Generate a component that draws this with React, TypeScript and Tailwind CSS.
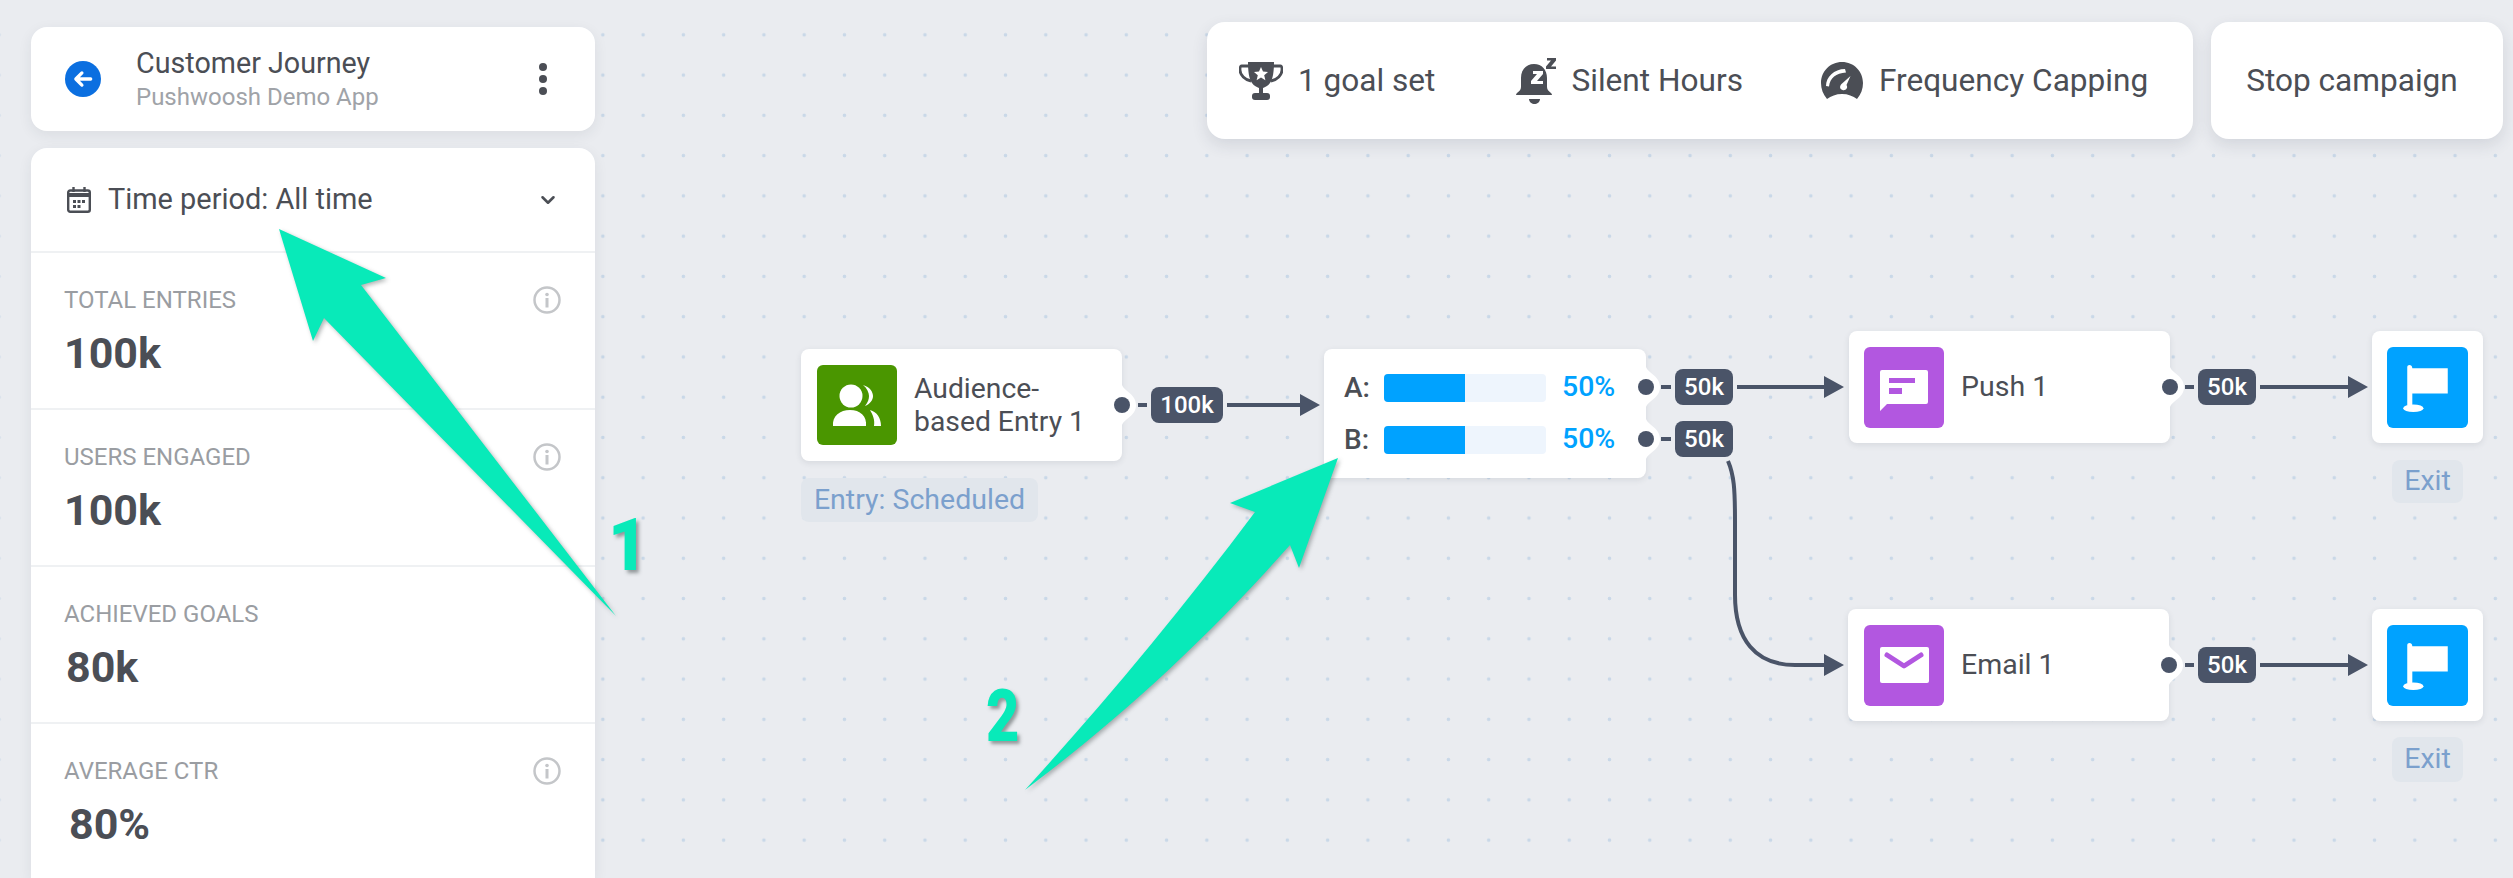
import { ChevronDown } from 'lucide-react';

const TrophyIcon = () => (
  <svg viewBox="0 0 44 38" className="h-[38px] w-[44px] shrink-0" fill="#4b4e55">
    <path d="M9 0h26c0 9-1 17-4 21-2 3-5 4-7 5v5h-4v-5c-2-1-5-2-7-5C10 17 9 9 9 0z" />
    <path d="M10 4H2.500C1 4 1 6 1 8c0 5 5 10 11 11M34 4h7.500C43 4 43 6 43 8c0 5-5 10-11 11" fill="none" stroke="#4b4e55" strokeWidth="2.800" />
    <rect x="13" y="31" width="18" height="7" rx="3" />
    <path d="M22 5l2 4.600 5 .4-3.800 3.300 1.200 5L22 15.600l-4.400 2.700 1.200-5L15 10l5-.4z" fill="#fff" />
  </svg>
);

const SilentBellIcon = () => (
  <svg viewBox="0 0 40 46" className="h-[46px] w-[40px] shrink-0" fill="#4b4e55">
    <path d="M18 6c8 0 13 6 13 14v9c0 3 2 4 4 6 1 1 1 2 1 2H0s0-1 1-2c2-2 4-3 4-6v-9C5 12 10 6 18 6z" />
    <path d="M13 41h11c0 3-3 5-5.500 5S13 44 13 41z" />
    <path d="M17 13h10v3l-6 7h6v3H15v-3l6-7h-4z" fill="#fff" />
    <path d="M31 0h9v2.500l-5 6h5V11H30V8.500l5-6h-4z" />
  </svg>
);

const GaugeIcon = () => (
  <svg viewBox="0 0 42 38" className="h-[38px] w-[42px] shrink-0" fill="#4b4e55">
    <path d="M21 0c12 0 21 9.500 21 21 0 6-2 11-6 16-4-3-9-5-15-5S10 34 6 37c-4-5-6-10-6-16C0 9.500 9 0 21 0z" />
    <path d="M5 24c0-9 8-17 19-17l1 3.500C15 11 9 16 8 24.500z" fill="#fff" />
    <path d="M29.500 14l-4 9c2 3-1 6-4 5-3-1-3-4-1-6z" fill="#fff" />
  </svg>
);

const InfoIcon = () => (
  <svg viewBox="0 0 28 28" className="h-[28px] w-[28px]" fill="none">
    <circle cx="14" cy="14" r="12.500" stroke="#c4c6c9" strokeWidth="2.500" />
    <circle cx="14" cy="8.500" r="1.800" fill="#c4c6c9" />
    <rect x="12.500" y="12" width="3" height="9.500" fill="#c4c6c9" />
  </svg>
);

const stats = [
  { label: 'TOTAL ENTRIES', value: '100k', info: true, indent: 'ml-0' },
  { label: 'USERS ENGAGED', value: '100k', info: true, indent: 'ml-0' },
  { label: 'ACHIEVED GOALS', value: '80k', info: false, indent: 'ml-[2px]' },
  { label: 'AVERAGE CTR', value: '80%', info: true, indent: 'ml-[5px]' },
];

const Sidebar = () => (
  <aside className="flex w-[564px] shrink-0 flex-col gap-[17px]">
    <div className="flex h-[104px] shrink-0 items-center rounded-[16px] bg-white pl-[34px] pr-[48px] shadow-[0_4px_14px_rgba(40,50,70,0.08)]">
      <div className="flex h-[36px] w-[36px] items-center justify-center rounded-full bg-[#0b6fe0]">
        <svg viewBox="0 0 20 20" className="h-[22px] w-[22px]" fill="none" stroke="#fff" strokeWidth="3" strokeLinecap="round" strokeLinejoin="round">
          <path d="M17 10H4M9 4.500L3.500 10 9 15.500" />
        </svg>
      </div>
      <div className="ml-[35px] flex-1">
        <div className="text-[28.7px] leading-[36px] text-[#4b4e55]">Customer Journey</div>
        <div className="text-[24px] leading-[32px] text-[#a0a3a8]">Pushwoosh Demo App</div>
      </div>
      <div className="flex flex-col gap-[4px]">
        <span className="h-[8px] w-[8px] rounded-full bg-[#4b4e55]" />
        <span className="h-[8px] w-[8px] rounded-full bg-[#4b4e55]" />
        <span className="h-[8px] w-[8px] rounded-full bg-[#4b4e55]" />
      </div>
    </div>

    <div className="min-h-0 flex-1 rounded-t-[16px] bg-white shadow-[0_4px_14px_rgba(40,50,70,0.08)]">
      <div className="flex h-[105px] items-center border-b-2 border-[#eff1f3] pl-[36px] pr-[36px]">
        <svg viewBox="0 0 24 26" className="h-[26px] w-[24px]" fill="none">
          <rect x="1.200" y="3.500" width="21.600" height="21.300" rx="2" stroke="#4b4e55" strokeWidth="2.400" />
          <path d="M1.500 8h21" stroke="#4b4e55" strokeWidth="4" />
          <path d="M6.500 0v5M17.500 0v5" stroke="#4b4e55" strokeWidth="2.400" />
          <path d="M6 13h3v3H6zM10.500 13h3v3h-3zM15 13h3v3h-3zM6 18h3v3H6zM10.500 18h3v3h-3z" fill="#4b4e55" />
        </svg>
        <span className="ml-[17px] flex-1 text-[28.9px] text-[#4b4e55]">Time period: All time</span>
        <ChevronDown className="h-[22px] w-[22px] text-[#4b4e55]" strokeWidth={2.800} />
      </div>
      {stats.map(s => (
        <div key={s.label} className="relative h-[157px] border-b-2 border-[#eff1f3] pl-[33px] pr-[34px] pt-[33px]">
          <div className="flex items-center justify-between">
            <span className="text-[24px] leading-[28px] text-[#9a9da2]">{s.label}</span>
            {s.info && <InfoIcon />}
          </div>
          <div className={`mt-[14px] text-[43px] font-bold leading-[50px] text-[#4b4e55] ${s.indent}`}>{s.value}</div>
        </div>
      ))}
    </div>
  </aside>
);

const Toolbar = () => (
  <div className="flex h-[117px] gap-[18px]">
    <div className="flex w-[986px] items-center rounded-[18px] bg-white pl-[32px] shadow-[0_6px_16px_rgba(40,50,70,0.12)]">
      <TrophyIcon />
      <span className="ml-[15px] text-[31.6px] text-[#4b4e55]">1 goal set</span>
      <span className="ml-[81px]"><SilentBellIcon /></span>
      <span className="ml-[15px] text-[31.6px] text-[#4b4e55]">Silent Hours</span>
      <span className="ml-[78px]"><GaugeIcon /></span>
      <span className="ml-[16px] text-[31.6px] text-[#4b4e55]">Frequency Capping</span>
    </div>
    <div className="flex w-[292px] items-center justify-center rounded-[18px] bg-white pr-[10px] text-[31.6px] text-[#4b4e55] shadow-[0_6px_16px_rgba(40,50,70,0.12)]">
      Stop campaign
    </div>
  </div>
);

// white bump + dot on the right edge of a node
const Port = ({ pos }: { pos: string }) => (
  <div className={`absolute h-[40px] w-[16px] ${pos}`}>
    <svg viewBox="0 0 16 40" className="absolute left-0 top-0 h-[40px] w-[16px]" fill="#fff">
      <path d="M0 0c3 7 14 9 14 20S3 33 0 40z" />
    </svg>
    <span className="absolute left-[-8px] top-[12px] h-[16px] w-[16px] rounded-full bg-[#4a5468]" />
  </div>
);

const Badge = ({ pos, text }: { pos: string; text: string }) => (
  <div className={`absolute flex h-[36px] items-center justify-center rounded-[8px] bg-[#4a5468] text-[24px] font-medium text-white ${pos}`}>
    {text}
  </div>
);

const Tag = ({ pos, text }: { pos: string; text: string }) => (
  <div className={`absolute flex items-center justify-center rounded-[8px] bg-[#e1e6ec] text-[28.5px] text-[#7ba0cd] ${pos}`}>
    {text}
  </div>
);

const FlagTile = () => (
  <div className="mx-auto mt-[15px] h-[81px] w-[81px] rounded-[6px] bg-[#00a2ff]">
    <svg viewBox="0 0 80 80" className="h-full w-full" fill="#fff">
      <path d="M20 20c0-3 5-3 5 1h35v25H25v12h-5z" />
      <ellipse cx="26" cy="60.500" rx="10" ry="3.800" />
    </svg>
  </div>
);

const Connectors = () => (
  <svg viewBox="0 0 2513 878" className="absolute inset-0 h-[878px] w-[2513px]" fill="none" stroke="#4a5468" strokeWidth="4">
    <path d="M1138 405h9M1227 405h74" />
    <path d="M1661 387h10M1661 439h10M1737 387h88" />
    <path d="M2185 387h9M2260 387h88M2185 665h9M2260 665h88" />
    <path d="M1728 461c6 14 7 28 7 60v74c0 44 20 70 60 70h29" />
    <g fill="#4a5468" stroke="none">
      <path d="M1300 394l20 11-20 11zM1824 376l20 11-20 11zM2348 376l20 11-20 11zM1824 654l20 11-20 11zM2348 654l20 11-20 11z" />
    </g>
  </svg>
);

const Canvas = () => (
  <div className="absolute inset-0">
    <Connectors />

    <div className="absolute left-[801px] top-[349px] flex h-[112px] w-[321px] items-center rounded-[8px] bg-white pl-[16px] shadow-[0_2px_6px_rgba(40,50,70,0.1)]">
      <div className="h-[80px] w-[80px] rounded-[6px] bg-[#4a9600]">
        <svg viewBox="0 0 80 80" className="h-full w-full" fill="#fff">
          <circle cx="34" cy="31" r="11.500" />
          <path d="M16 61c-1-10 7-16 17-16s17 6 16 16z" />
          <path d="M46 20c7 2 10 7 10 11s-3 8-8 10c3-4 4-7 4-10s-2-8-6-11zM53 45c7 2 11 8 11 16h-7c1-6-1-11-4-16z" />
        </svg>
      </div>
      <div className="ml-[17px] text-[28.3px] leading-[33px] text-[#4b4e55]">Audience-<br />based Entry 1</div>
    </div>
    <Port pos="left-[1122px] top-[385px]" />
    <Badge pos="left-[1151px] top-[387px] w-[72px]" text="100k" />
    <Tag pos="left-[801px] top-[478px] h-[44px] w-[237px]" text="Entry: Scheduled" />

    <div className="absolute left-[1324px] top-[349px] flex h-[129px] w-[322px] flex-col justify-center gap-[24px] rounded-[8px] bg-white pl-[20px] shadow-[0_2px_6px_rgba(40,50,70,0.1)]">
      {['A:', 'B:'].map(l => (
        <div key={l} className="flex h-[28px] items-center">
          <span className="w-[40px] text-[28px] font-medium text-[#4b4e55]">{l}</span>
          <div className="h-[28px] w-[162px] overflow-hidden rounded-[4px] bg-[#eef5fd]">
            <div className="h-full w-[81px] bg-[#00a2ff]" />
          </div>
          <span className="ml-[16px] text-[28.4px] font-medium text-[#00a2ff]">50%</span>
        </div>
      ))}
    </div>
    <Port pos="left-[1646px] top-[367px]" />
    <Port pos="left-[1646px] top-[419px]" />
    <Badge pos="left-[1675px] top-[369px] w-[58px]" text="50k" />
    <Badge pos="left-[1675px] top-[421px] w-[58px]" text="50k" />

    <div className="absolute left-[1849px] top-[331px] flex h-[112px] w-[321px] items-center rounded-[8px] bg-white pl-[15px] shadow-[0_2px_6px_rgba(40,50,70,0.1)]">
      <div className="h-[81px] w-[80px] rounded-[6px] bg-[#b257e0]">
        <svg viewBox="0 0 80 81" className="h-full w-full">
          <path d="M16 25a2 2 0 012-2h44a2 2 0 012 2v30a2 2 0 01-2 2H23l-7 7z" fill="#fff" />
          <path d="M25 31h26v5H25zM25 41h13v6H25z" fill="#b257e0" />
        </svg>
      </div>
      <span className="ml-[17px] text-[28.5px] text-[#4b4e55]">Push 1</span>
    </div>
    <Port pos="left-[2170px] top-[367px]" />
    <Badge pos="left-[2198px] top-[369px] w-[58px]" text="50k" />
    <div className="absolute left-[2372px] top-[331px] h-[112px] w-[111px] rounded-[8px] bg-white pt-px shadow-[0_2px_6px_rgba(40,50,70,0.1)]">
      <FlagTile />
    </div>
    <Tag pos="left-[2392px] top-[460px] h-[43px] w-[71px]" text="Exit" />

    <div className="absolute left-[1848px] top-[609px] flex h-[112px] w-[321px] items-center rounded-[8px] bg-white pl-[16px] shadow-[0_2px_6px_rgba(40,50,70,0.1)]">
      <div className="h-[81px] w-[80px] rounded-[6px] bg-[#b257e0]">
        <svg viewBox="0 0 80 81" className="h-full w-full" fill="none">
          <rect x="16" y="22" width="49" height="36" rx="2" fill="#fff" />
          <path d="M23 30l17 11 17-11" stroke="#b257e0" strokeWidth="5" strokeLinecap="round" strokeLinejoin="round" />
        </svg>
      </div>
      <span className="ml-[17px] text-[28.5px] text-[#4b4e55]">Email 1</span>
    </div>
    <Port pos="left-[2169px] top-[645px]" />
    <Badge pos="left-[2198px] top-[647px] w-[58px]" text="50k" />
    <div className="absolute left-[2372px] top-[609px] h-[112px] w-[111px] rounded-[8px] bg-white pt-px shadow-[0_2px_6px_rgba(40,50,70,0.1)]">
      <FlagTile />
    </div>
    <Tag pos="left-[2392px] top-[737px] h-[45px] w-[71px]" text="Exit" />
  </div>
);

// the two green callout arrows and numbers lying over the screenshot
const Annotations = () => (
  <>
    <svg viewBox="0 0 2513 878" className="pointer-events-none absolute inset-0 h-[878px] w-[2513px] drop-shadow-[2px_2px_2px_rgba(60,70,70,0.4)]" fill="#08eab9">
      <path d="M279 229L386 278 361 285 616 616 324 318 313 341z" />
      <path d="M1338 458l-108 45 25 9c-75 100-150 190-230 278 100-75 185-155 265-245l9 23z" />
    </svg>
    <span className="absolute left-[608px] top-[500px] origin-left scale-x-[0.95] text-[72px] font-black leading-[92px] text-[#08eab9] [text-shadow:3px_3px_4px_rgba(60,70,70,0.5)]">1</span>
    <span className="absolute left-[986px] top-[671px] origin-left scale-x-[0.8] text-[72px] font-black leading-[92px] text-[#08eab9] [text-shadow:3px_3px_4px_rgba(60,70,70,0.5)]">2</span>
  </>
);

export default function App() {
  return (
    <div className="relative h-[878px] w-[2513px] overflow-hidden bg-[#eaecf0] bg-[radial-gradient(circle,#c9d8e8_1.5px,transparent_2.1px)] bg-[size:40.27px_40.27px] bg-[position:19px_14.7px] font-['Roboto',sans-serif]">
      <Canvas />
      <div className="relative flex h-full justify-between pl-[31px] pr-[10px] pt-[27px]">
        <Sidebar />
        <div className="mt-[-5px]">
          <Toolbar />
        </div>
      </div>
      <Annotations />
    </div>
  );
}
